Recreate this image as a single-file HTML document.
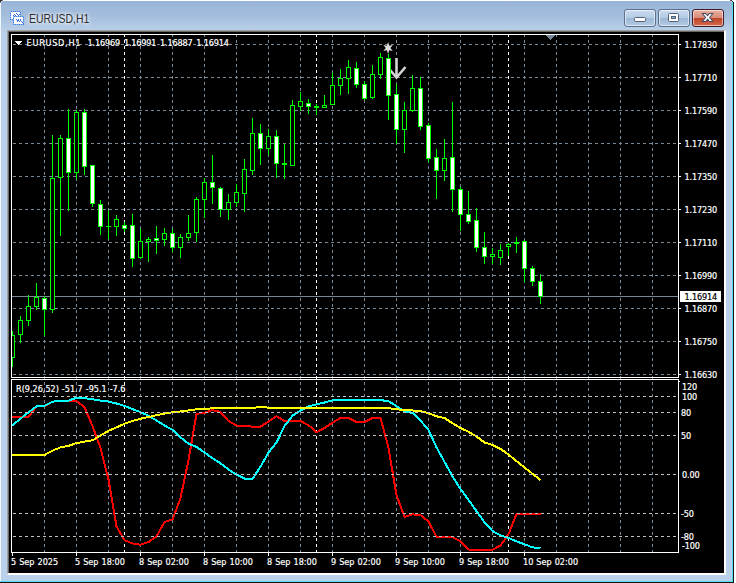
<!DOCTYPE html>
<html><head><meta charset="utf-8"><title>EURUSD,H1</title>
<style>
html,body{margin:0;padding:0;background:#fff;}
#w{position:relative;width:736px;height:583px;overflow:hidden;background:#fff;font-family:"Liberation Sans",sans-serif;}
#frame{position:absolute;left:0;top:0;width:734px;height:583px;background:#b9d1ea;}
#tb{position:absolute;left:0;top:0;width:733px;height:32px;background:linear-gradient(#fff 0,#fff 1px,#99b5d7 1px,#a3bddc 15px,#b9cfe8 30px);}
#le{position:absolute;left:0;top:0;width:1px;height:582px;background:#f0f6fc;}
#re1{position:absolute;left:732px;top:1px;width:1px;height:581px;background:#4fdcf6;}
#re2{position:absolute;left:733px;top:1px;width:1px;height:582px;background:#1c1214;}
#be1{position:absolute;left:0;top:581px;width:733px;height:1px;background:#4fdcf6;}
#be2{position:absolute;left:0;top:582px;width:734px;height:1px;background:#1c1214;}
#sunk{position:absolute;left:7px;top:30px;width:719px;height:545px;box-sizing:border-box;border-left:1px solid #a0a0a0;border-top:1px solid #a0a0a0;border-right:2px solid #fff;border-bottom:2px solid #fff;background:#696969;}
.t{position:absolute;font-family:"DejaVu Sans Condensed","DejaVu Sans","Liberation Sans",sans-serif;font-size:9px;line-height:11px;color:#fff;white-space:nowrap;-webkit-text-stroke:.2px;}
.p{letter-spacing:-.15px}
#title{position:absolute;left:29.4px;top:10px;font-size:12.5px;line-height:18px;color:#2e2e2e;transform-origin:0 0;transform:scaleX(0.835);text-shadow:0 0 4px #fff,0 0 6px #fff;}
.btn{position:absolute;top:9px;width:32px;height:18px;box-sizing:border-box;border:1px solid #5b6f8c;border-radius:3px;background:linear-gradient(#c9dbee 0,#b4cbe4 49%,#9bb6d6 50%,#b3cae4 100%);box-shadow:inset 0 0 0 1px rgba(255,255,255,.55);}
#bx{border-color:#431a2a;background:linear-gradient(#eab0a2 0,#d88a78 49%,#bf4326 50%,#d5694c 100%);}
</style></head><body><div id="w">
<div id="frame"></div><div id="tb"></div><div id="le"></div><div id="re1"></div><div id="re2"></div><div id="be1"></div><div id="be2"></div>
<div id="sunk"></div>
<svg width="16" height="16" viewBox="0 0 16 16" style="position:absolute;left:9px;top:10px" shape-rendering="crispEdges">
<rect x="1.5" y="1.5" width="10" height="8" fill="#fff" stroke="#8fb6f4"/>
<rect x="1.5" y="1.5" width="10" height="8" fill="none" stroke="#3a7bea" stroke-dasharray="1 1"/>
<path d="M3.5 5.5 h1 M4.5 4.5 h1 M5.5 5.5 h1 M6.5 3.5 h1 M7.5 4.5 h1 M8.5 5.5 h1 M9.5 4.5 h1" fill="none" stroke="#3a6fe0"/>
<rect x="4.5" y="6.5" width="10" height="8" fill="#fff" stroke="#8fb6f4"/>
<rect x="4.5" y="6.5" width="10" height="8" fill="none" stroke="#3a7bea" stroke-dasharray="1 1"/>
<path d="M6.5 9.5 h1 M7.5 10.5 h1 M7.5 11.5 h1 M8.5 9.5 h1 M8.5 10.5 h1 M9.5 11.5 h1 M10.5 10.5 h1 M10.5 9.5 h1 M11.5 11.5 h1 M12.5 12.5 h1" fill="none" stroke="#3a6fe0"/>
</svg>
<svg width="736" height="6" style="position:absolute;left:0;top:0" shape-rendering="crispEdges">
<rect x="0" y="0" width="2" height="1" fill="#2a2a2a"/><rect x="0" y="1" width="1" height="1" fill="#2a2a2a"/><rect x="2" y="0" width="1" height="1" fill="#8a8f96"/><rect x="0" y="2" width="1" height="1" fill="#8a8f96"/><rect x="1" y="1" width="1" height="1" fill="#dfe8f2"/>
<rect x="730" y="0" width="1" height="1" fill="#6b7785"/><rect x="731" y="0" width="1" height="1" fill="#222"/><rect x="732" y="0" width="2" height="1" fill="#fff"/><rect x="732" y="1" width="1" height="1" fill="#222"/><rect x="733" y="1" width="1" height="1" fill="#fff"/><rect x="731" y="1" width="1" height="1" fill="#cfeaf6"/>
</svg>
<div id="title">EURUSD,H1</div>
<div class="btn" style="left:624px"><svg width="30" height="16" style="position:absolute;left:0;top:0"><rect x="9.5" y="7.5" width="11" height="4" rx="1" fill="#fff" stroke="#53607a"/></svg></div>
<div class="btn" style="left:658px"><svg width="30" height="16" style="position:absolute;left:0;top:0"><rect x="9.5" y="3.5" width="10" height="8" rx="1" fill="#fff" stroke="#53607a"/><rect x="12.5" y="6.5" width="4" height="2" fill="#8fb0d6" stroke="#53607a"/></svg></div>
<div class="btn" id="bx" style="left:692px"><svg width="30" height="16" style="position:absolute;left:0;top:0"><path d="M9.3 3.5 L12.8 3.5 L14.6 5.7 L16.4 3.5 L19.9 3.5 L16.6 7.5 L19.9 11.5 L16.4 11.5 L14.6 9.3 L12.8 11.5 L9.3 11.5 L12.6 7.5 Z" fill="#fff" stroke="#434a66" stroke-width="1.1" stroke-linejoin="round"/></svg></div>
<svg width="736" height="583" viewBox="0 0 736 583" style="position:absolute;left:0;top:0" shape-rendering="crispEdges"><rect x="9" y="32" width="715" height="541" fill="#000"/><line x1="13" y1="44.5" x2="678" y2="44.5" stroke="#778899" stroke-dasharray="3 3"/><line x1="13" y1="77.5" x2="678" y2="77.5" stroke="#778899" stroke-dasharray="3 3"/><line x1="13" y1="110.5" x2="678" y2="110.5" stroke="#778899" stroke-dasharray="3 3"/><line x1="13" y1="143.5" x2="678" y2="143.5" stroke="#778899" stroke-dasharray="3 3"/><line x1="13" y1="176.5" x2="678" y2="176.5" stroke="#778899" stroke-dasharray="3 3"/><line x1="13" y1="209.5" x2="678" y2="209.5" stroke="#778899" stroke-dasharray="3 3"/><line x1="13" y1="242.5" x2="678" y2="242.5" stroke="#778899" stroke-dasharray="3 3"/><line x1="13" y1="275.5" x2="678" y2="275.5" stroke="#778899" stroke-dasharray="3 3"/><line x1="13" y1="308.5" x2="678" y2="308.5" stroke="#778899" stroke-dasharray="3 3"/><line x1="13" y1="341.5" x2="678" y2="341.5" stroke="#778899" stroke-dasharray="3 3"/><line x1="13" y1="374.5" x2="678" y2="374.5" stroke="#778899" stroke-dasharray="3 3"/><line x1="44.5" y1="34" x2="44.5" y2="552" stroke="#778899" stroke-dasharray="3 3"/><line x1="76.5" y1="34" x2="76.5" y2="552" stroke="#778899" stroke-dasharray="3 3"/><line x1="108.5" y1="34" x2="108.5" y2="552" stroke="#778899" stroke-dasharray="3 3"/><line x1="140.5" y1="34" x2="140.5" y2="552" stroke="#778899" stroke-dasharray="3 3"/><line x1="172.5" y1="34" x2="172.5" y2="552" stroke="#778899" stroke-dasharray="3 3"/><line x1="204.5" y1="34" x2="204.5" y2="552" stroke="#778899" stroke-dasharray="3 3"/><line x1="236.5" y1="34" x2="236.5" y2="552" stroke="#778899" stroke-dasharray="3 3"/><line x1="268.5" y1="34" x2="268.5" y2="552" stroke="#778899" stroke-dasharray="3 3"/><line x1="300.5" y1="34" x2="300.5" y2="552" stroke="#778899" stroke-dasharray="3 3"/><line x1="332.5" y1="34" x2="332.5" y2="552" stroke="#778899" stroke-dasharray="3 3"/><line x1="364.5" y1="34" x2="364.5" y2="552" stroke="#778899" stroke-dasharray="3 3"/><line x1="396.5" y1="34" x2="396.5" y2="552" stroke="#778899" stroke-dasharray="3 3"/><line x1="428.5" y1="34" x2="428.5" y2="552" stroke="#778899" stroke-dasharray="3 3"/><line x1="460.5" y1="34" x2="460.5" y2="552" stroke="#778899" stroke-dasharray="3 3"/><line x1="492.5" y1="34" x2="492.5" y2="552" stroke="#778899" stroke-dasharray="3 3"/><line x1="524.5" y1="34" x2="524.5" y2="552" stroke="#778899" stroke-dasharray="3 3"/><line x1="556.5" y1="34" x2="556.5" y2="552" stroke="#778899" stroke-dasharray="3 3"/><line x1="588.5" y1="34" x2="588.5" y2="552" stroke="#778899" stroke-dasharray="3 3"/><line x1="620.5" y1="34" x2="620.5" y2="552" stroke="#778899" stroke-dasharray="3 3"/><line x1="652.5" y1="34" x2="652.5" y2="552" stroke="#778899" stroke-dasharray="3 3"/><line x1="124.5" y1="34" x2="124.5" y2="552" stroke="#fff" stroke-dasharray="3 3"/><line x1="316.5" y1="34" x2="316.5" y2="552" stroke="#fff" stroke-dasharray="3 3"/><line x1="508.5" y1="34" x2="508.5" y2="552" stroke="#fff" stroke-dasharray="3 3"/><line x1="12" y1="296.5" x2="678" y2="296.5" stroke="#778899"/><g shape-rendering="auto" fill="none" stroke="#d4d4d4" stroke-width="2.6" stroke-linecap="butt" stroke-linejoin="miter"><path d="M396.5 58 V77"/><path d="M387.5 67 L396.5 77.5 L405.5 67"/></g><clipPath id="cc"><rect x="12" y="35" width="666" height="342"/></clipPath><g clip-path="url(#cc)"><rect x="12" y="331" width="1" height="36" fill="#00ff00"/><rect x="10" y="335" width="5" height="23" fill="#00ff00"/><rect x="11" y="336" width="3" height="21" fill="#000"/><rect x="20" y="316" width="1" height="27" fill="#00ff00"/><rect x="18" y="320" width="5" height="15" fill="#00ff00"/><rect x="19" y="321" width="3" height="13" fill="#000"/><rect x="28" y="295" width="1" height="31" fill="#00ff00"/><rect x="26" y="306" width="5" height="15" fill="#00ff00"/><rect x="27" y="307" width="3" height="13" fill="#000"/><rect x="36" y="283" width="1" height="27" fill="#00ff00"/><rect x="34" y="297" width="5" height="10" fill="#00ff00"/><rect x="35" y="298" width="3" height="8" fill="#000"/><rect x="44" y="296" width="1" height="40" fill="#00ff00"/><rect x="42" y="298" width="5" height="12" fill="#00ff00"/><rect x="43" y="299" width="3" height="10" fill="#fff"/><rect x="52" y="135" width="1" height="178" fill="#00ff00"/><rect x="50" y="178" width="5" height="132" fill="#00ff00"/><rect x="51" y="179" width="3" height="130" fill="#000"/><rect x="60" y="135" width="1" height="101" fill="#00ff00"/><rect x="58" y="138" width="5" height="40" fill="#00ff00"/><rect x="59" y="139" width="3" height="38" fill="#000"/><rect x="68" y="109" width="1" height="102" fill="#00ff00"/><rect x="66" y="138" width="5" height="35" fill="#00ff00"/><rect x="67" y="139" width="3" height="33" fill="#fff"/><rect x="76" y="110" width="1" height="69" fill="#00ff00"/><rect x="74" y="112" width="5" height="61" fill="#00ff00"/><rect x="75" y="113" width="3" height="59" fill="#000"/><rect x="84" y="109" width="1" height="66" fill="#00ff00"/><rect x="82" y="112" width="5" height="55" fill="#00ff00"/><rect x="83" y="113" width="3" height="53" fill="#fff"/><rect x="92" y="165" width="1" height="42" fill="#00ff00"/><rect x="90" y="165" width="5" height="39" fill="#00ff00"/><rect x="91" y="166" width="3" height="37" fill="#fff"/><rect x="100" y="200" width="1" height="35" fill="#00ff00"/><rect x="98" y="204" width="5" height="23" fill="#00ff00"/><rect x="99" y="205" width="3" height="21" fill="#fff"/><rect x="108" y="210" width="1" height="29" fill="#00ff00"/><rect x="106" y="226" width="5" height="1" fill="#00ff00"/><rect x="116" y="215" width="1" height="21" fill="#00ff00"/><rect x="114" y="219" width="5" height="8" fill="#00ff00"/><rect x="115" y="220" width="3" height="6" fill="#000"/><rect x="124" y="222" width="1" height="10" fill="#00ff00"/><rect x="122" y="225" width="5" height="4" fill="#00ff00"/><rect x="123" y="226" width="3" height="2" fill="#fff"/><rect x="132" y="214" width="1" height="53" fill="#00ff00"/><rect x="130" y="225" width="5" height="34" fill="#00ff00"/><rect x="131" y="226" width="3" height="32" fill="#fff"/><rect x="140" y="229" width="1" height="30" fill="#00ff00"/><rect x="138" y="241" width="5" height="17" fill="#00ff00"/><rect x="139" y="242" width="3" height="15" fill="#000"/><rect x="148" y="237" width="1" height="25" fill="#00ff00"/><rect x="146" y="239" width="5" height="3" fill="#00ff00"/><rect x="147" y="240" width="3" height="1" fill="#000"/><rect x="156" y="226" width="1" height="28" fill="#00ff00"/><rect x="154" y="238" width="5" height="3" fill="#00ff00"/><rect x="155" y="239" width="3" height="1" fill="#fff"/><rect x="164" y="228" width="1" height="18" fill="#00ff00"/><rect x="162" y="233" width="5" height="7" fill="#00ff00"/><rect x="163" y="234" width="3" height="5" fill="#000"/><rect x="172" y="229" width="1" height="23" fill="#00ff00"/><rect x="170" y="233" width="5" height="15" fill="#00ff00"/><rect x="171" y="234" width="3" height="13" fill="#fff"/><rect x="180" y="234" width="1" height="24" fill="#00ff00"/><rect x="178" y="237" width="5" height="11" fill="#00ff00"/><rect x="179" y="238" width="3" height="9" fill="#000"/><rect x="188" y="215" width="1" height="26" fill="#00ff00"/><rect x="186" y="233" width="5" height="5" fill="#00ff00"/><rect x="187" y="234" width="3" height="3" fill="#000"/><rect x="196" y="197" width="1" height="45" fill="#00ff00"/><rect x="194" y="199" width="5" height="34" fill="#00ff00"/><rect x="195" y="200" width="3" height="32" fill="#000"/><rect x="204" y="178" width="1" height="40" fill="#00ff00"/><rect x="202" y="182" width="5" height="18" fill="#00ff00"/><rect x="203" y="183" width="3" height="16" fill="#000"/><rect x="212" y="155" width="1" height="49" fill="#00ff00"/><rect x="210" y="182" width="5" height="6" fill="#00ff00"/><rect x="211" y="183" width="3" height="4" fill="#fff"/><rect x="220" y="187" width="1" height="30" fill="#00ff00"/><rect x="218" y="188" width="5" height="22" fill="#00ff00"/><rect x="219" y="189" width="3" height="20" fill="#fff"/><rect x="228" y="194" width="1" height="26" fill="#00ff00"/><rect x="226" y="202" width="5" height="8" fill="#00ff00"/><rect x="227" y="203" width="3" height="6" fill="#000"/><rect x="236" y="184" width="1" height="23" fill="#00ff00"/><rect x="234" y="192" width="5" height="11" fill="#00ff00"/><rect x="235" y="193" width="3" height="9" fill="#000"/><rect x="244" y="159" width="1" height="53" fill="#00ff00"/><rect x="242" y="169" width="5" height="25" fill="#00ff00"/><rect x="243" y="170" width="3" height="23" fill="#000"/><rect x="252" y="118" width="1" height="57" fill="#00ff00"/><rect x="250" y="133" width="5" height="38" fill="#00ff00"/><rect x="251" y="134" width="3" height="36" fill="#000"/><rect x="260" y="124" width="1" height="41" fill="#00ff00"/><rect x="258" y="133" width="5" height="16" fill="#00ff00"/><rect x="259" y="134" width="3" height="14" fill="#fff"/><rect x="268" y="129" width="1" height="26" fill="#00ff00"/><rect x="266" y="136" width="5" height="13" fill="#00ff00"/><rect x="267" y="137" width="3" height="11" fill="#000"/><rect x="276" y="130" width="1" height="48" fill="#00ff00"/><rect x="274" y="136" width="5" height="28" fill="#00ff00"/><rect x="275" y="137" width="3" height="26" fill="#fff"/><rect x="284" y="144" width="1" height="35" fill="#00ff00"/><rect x="282" y="163" width="5" height="2" fill="#00ff00"/><rect x="292" y="100" width="1" height="66" fill="#00ff00"/><rect x="290" y="105" width="5" height="61" fill="#00ff00"/><rect x="291" y="106" width="3" height="59" fill="#000"/><rect x="300" y="92" width="1" height="19" fill="#00ff00"/><rect x="298" y="101" width="5" height="6" fill="#00ff00"/><rect x="299" y="102" width="3" height="4" fill="#000"/><rect x="308" y="99" width="1" height="15" fill="#00ff00"/><rect x="306" y="103" width="5" height="4" fill="#00ff00"/><rect x="307" y="104" width="3" height="2" fill="#fff"/><rect x="316" y="104" width="1" height="11" fill="#00ff00"/><rect x="314" y="106" width="5" height="2" fill="#00ff00"/><rect x="324" y="95" width="1" height="13" fill="#00ff00"/><rect x="322" y="105" width="5" height="3" fill="#00ff00"/><rect x="323" y="106" width="3" height="1" fill="#000"/><rect x="332" y="73" width="1" height="32" fill="#00ff00"/><rect x="330" y="85" width="5" height="20" fill="#00ff00"/><rect x="331" y="86" width="3" height="18" fill="#000"/><rect x="340" y="69" width="1" height="26" fill="#00ff00"/><rect x="338" y="78" width="5" height="8" fill="#00ff00"/><rect x="339" y="79" width="3" height="6" fill="#000"/><rect x="348" y="60" width="1" height="34" fill="#00ff00"/><rect x="346" y="67" width="5" height="12" fill="#00ff00"/><rect x="347" y="68" width="3" height="10" fill="#000"/><rect x="356" y="62" width="1" height="26" fill="#00ff00"/><rect x="354" y="68" width="5" height="17" fill="#00ff00"/><rect x="355" y="69" width="3" height="15" fill="#fff"/><rect x="364" y="81" width="1" height="19" fill="#00ff00"/><rect x="362" y="84" width="5" height="15" fill="#00ff00"/><rect x="363" y="85" width="3" height="13" fill="#fff"/><rect x="372" y="65" width="1" height="34" fill="#00ff00"/><rect x="370" y="74" width="5" height="24" fill="#00ff00"/><rect x="371" y="75" width="3" height="22" fill="#000"/><rect x="380" y="53" width="1" height="26" fill="#00ff00"/><rect x="378" y="57" width="5" height="18" fill="#00ff00"/><rect x="379" y="58" width="3" height="16" fill="#000"/><rect x="388" y="54" width="1" height="66" fill="#00ff00"/><rect x="386" y="58" width="5" height="38" fill="#00ff00"/><rect x="387" y="59" width="3" height="36" fill="#fff"/><rect x="396" y="84" width="1" height="60" fill="#00ff00"/><rect x="394" y="94" width="5" height="36" fill="#00ff00"/><rect x="395" y="95" width="3" height="34" fill="#fff"/><rect x="404" y="102" width="1" height="51" fill="#00ff00"/><rect x="402" y="110" width="5" height="20" fill="#00ff00"/><rect x="403" y="111" width="3" height="18" fill="#000"/><rect x="412" y="75" width="1" height="37" fill="#00ff00"/><rect x="410" y="88" width="5" height="23" fill="#00ff00"/><rect x="411" y="89" width="3" height="21" fill="#000"/><rect x="420" y="77" width="1" height="53" fill="#00ff00"/><rect x="418" y="88" width="5" height="39" fill="#00ff00"/><rect x="419" y="89" width="3" height="37" fill="#fff"/><rect x="428" y="123" width="1" height="39" fill="#00ff00"/><rect x="426" y="125" width="5" height="34" fill="#00ff00"/><rect x="427" y="126" width="3" height="32" fill="#fff"/><rect x="436" y="149" width="1" height="50" fill="#00ff00"/><rect x="434" y="157" width="5" height="14" fill="#00ff00"/><rect x="435" y="158" width="3" height="12" fill="#fff"/><rect x="444" y="139" width="1" height="42" fill="#00ff00"/><rect x="442" y="158" width="5" height="13" fill="#00ff00"/><rect x="443" y="159" width="3" height="11" fill="#000"/><rect x="452" y="102" width="1" height="110" fill="#00ff00"/><rect x="450" y="157" width="5" height="33" fill="#00ff00"/><rect x="451" y="158" width="3" height="31" fill="#fff"/><rect x="460" y="187" width="1" height="44" fill="#00ff00"/><rect x="458" y="189" width="5" height="26" fill="#00ff00"/><rect x="459" y="190" width="3" height="24" fill="#fff"/><rect x="468" y="191" width="1" height="33" fill="#00ff00"/><rect x="466" y="214" width="5" height="8" fill="#00ff00"/><rect x="467" y="215" width="3" height="6" fill="#fff"/><rect x="476" y="208" width="1" height="44" fill="#00ff00"/><rect x="474" y="220" width="5" height="28" fill="#00ff00"/><rect x="475" y="221" width="3" height="26" fill="#fff"/><rect x="484" y="232" width="1" height="32" fill="#00ff00"/><rect x="482" y="247" width="5" height="10" fill="#00ff00"/><rect x="483" y="248" width="3" height="8" fill="#fff"/><rect x="492" y="248" width="1" height="16" fill="#00ff00"/><rect x="490" y="254" width="5" height="3" fill="#00ff00"/><rect x="491" y="255" width="3" height="1" fill="#000"/><rect x="500" y="244" width="1" height="21" fill="#00ff00"/><rect x="498" y="250" width="5" height="8" fill="#00ff00"/><rect x="499" y="251" width="3" height="6" fill="#000"/><rect x="508" y="243" width="1" height="13" fill="#00ff00"/><rect x="506" y="244" width="5" height="3" fill="#00ff00"/><rect x="507" y="245" width="3" height="1" fill="#000"/><rect x="516" y="237" width="1" height="16" fill="#00ff00"/><rect x="514" y="242" width="5" height="2" fill="#00ff00"/><rect x="524" y="240" width="1" height="42" fill="#00ff00"/><rect x="522" y="241" width="5" height="28" fill="#00ff00"/><rect x="523" y="242" width="3" height="26" fill="#fff"/><rect x="532" y="266" width="1" height="20" fill="#00ff00"/><rect x="530" y="268" width="5" height="14" fill="#00ff00"/><rect x="531" y="269" width="3" height="12" fill="#fff"/><rect x="540" y="274" width="1" height="30" fill="#00ff00"/><rect x="538" y="281" width="5" height="16" fill="#00ff00"/><rect x="539" y="282" width="3" height="14" fill="#fff"/></g><polygon shape-rendering="auto" points="388.10,41.90 389.27,45.65 392.78,44.90 390.44,47.90 392.78,50.90 389.27,50.15 388.10,53.90 386.93,50.15 383.42,50.90 385.76,47.90 383.42,44.90 386.93,45.65" fill="#dcdcdc"/><polygon points="546,35 555,35 550.5,40" fill="#778899"/><clipPath id="ci"><rect x="12" y="380" width="666" height="172"/></clipPath><g clip-path="url(#ci)"><polyline shape-rendering="crispEdges" points="4.5,417.0 12.5,417.0 20.5,417.0 28.5,417.0 36.5,406.3 44.5,406.3 52.5,401.6 60.5,401.0 68.5,401.0 76.5,401.2 84.5,407.2 92.5,426.1 100.5,448.0 108.5,479.5 116.5,526.4 124.5,540.2 132.5,543.4 140.5,544.7 148.5,542.1 156.5,536.4 164.5,522.1 172.5,519.4 180.5,498.1 188.5,460.0 196.5,413.8 204.5,412.9 212.5,410.1 220.5,412.0 228.5,421.0 236.5,425.5 244.5,425.7 252.5,426.7 260.5,426.7 268.5,421.4 276.5,416.3 284.5,421.0 292.5,421.0 300.5,421.0 308.5,425.2 316.5,432.2 324.5,428.0 332.5,422.7 340.5,418.0 348.5,418.0 356.5,422.0 364.5,422.0 372.5,418.0 380.5,418.0 388.5,447.8 396.5,495.2 404.5,516.9 412.5,514.4 420.5,515.0 428.5,521.6 436.5,536.7 444.5,536.7 452.5,537.0 460.5,541.4 468.5,549.5 476.5,549.9 484.5,549.9 492.5,549.7 500.5,545.5 508.5,534.3 516.5,514.0 524.5,514.0 532.5,514.0 540.5,514.0" fill="none" stroke="#ff0000" stroke-width="2" stroke-linejoin="round"/><polyline shape-rendering="crispEdges" points="4.5,431.8 12.5,425.2 20.5,418.6 28.5,412.3 36.5,406.3 44.5,405.9 52.5,401.6 60.5,401.0 68.5,400.6 76.5,397.8 84.5,398.2 92.5,399.3 100.5,400.6 108.5,401.6 116.5,403.5 124.5,405.9 132.5,409.1 140.5,412.2 148.5,415.7 156.5,420.5 164.5,425.5 172.5,429.9 180.5,437.4 188.5,443.7 196.5,446.9 204.5,452.5 212.5,458.2 220.5,463.3 228.5,469.5 236.5,474.6 244.5,478.6 252.5,478.9 260.5,466.7 268.5,452.5 276.5,442.5 284.5,426.1 292.5,415.7 300.5,410.5 308.5,406.3 316.5,404.4 324.5,402.5 332.5,400.3 340.5,400.1 348.5,400.1 356.5,400.1 364.5,400.1 372.5,400.1 380.5,400.1 388.5,401.2 396.5,406.1 404.5,411.3 412.5,412.9 420.5,420.5 428.5,429.9 436.5,447.4 444.5,461.8 452.5,476.3 460.5,489.0 468.5,499.9 476.5,511.2 484.5,522.2 492.5,531.0 500.5,535.4 508.5,537.9 516.5,541.4 524.5,544.2 532.5,547.4 540.5,548.0" fill="none" stroke="#00ffff" stroke-width="2" stroke-linejoin="round"/><polyline shape-rendering="crispEdges" points="4.5,455.0 12.5,455.0 20.5,455.0 28.5,455.0 36.5,455.0 44.5,455.0 52.5,450.6 60.5,447.4 68.5,445.9 76.5,443.1 84.5,441.6 92.5,440.3 100.5,435.5 108.5,430.8 116.5,427.4 124.5,423.8 132.5,421.0 140.5,418.7 148.5,417.0 156.5,415.2 164.5,413.5 172.5,412.3 180.5,411.4 188.5,410.5 196.5,409.3 204.5,408.9 212.5,408.3 220.5,407.8 228.5,407.8 236.5,407.8 244.5,407.8 252.5,407.8 260.5,407.2 268.5,407.6 276.5,407.8 284.5,407.8 292.5,407.8 300.5,407.8 308.5,407.8 316.5,407.8 324.5,407.8 332.5,407.8 340.5,407.8 348.5,407.8 356.5,407.8 364.5,407.8 372.5,407.8 380.5,407.8 388.5,408.2 396.5,409.3 404.5,410.1 412.5,410.5 420.5,411.0 428.5,413.3 436.5,416.3 444.5,418.0 452.5,423.3 460.5,428.0 468.5,431.8 476.5,436.5 484.5,442.5 492.5,445.0 500.5,448.9 508.5,454.5 516.5,461.1 524.5,467.5 532.5,473.8 540.5,480.1" fill="none" stroke="#ffff00" stroke-width="2" stroke-linejoin="round"/></g><line x1="13" y1="396.5" x2="678" y2="396.5" stroke="#c0c0c0" stroke-dasharray="3 3"/><line x1="13" y1="412.5" x2="678" y2="412.5" stroke="#c0c0c0" stroke-dasharray="3 3"/><line x1="13" y1="435.5" x2="678" y2="435.5" stroke="#c0c0c0" stroke-dasharray="3 3"/><line x1="13" y1="474.5" x2="678" y2="474.5" stroke="#c0c0c0" stroke-dasharray="3 3"/><line x1="13" y1="513.5" x2="678" y2="513.5" stroke="#c0c0c0" stroke-dasharray="3 3"/><line x1="13" y1="536.5" x2="678" y2="536.5" stroke="#c0c0c0" stroke-dasharray="3 3"/><rect x="11.5" y="34.5" width="667" height="343" fill="none" stroke="#fff"/><rect x="11.5" y="379.5" width="667" height="173" fill="none" stroke="#fff"/><rect x="679" y="44" width="2" height="1" fill="#fff"/><rect x="679" y="77" width="2" height="1" fill="#fff"/><rect x="679" y="110" width="2" height="1" fill="#fff"/><rect x="679" y="143" width="2" height="1" fill="#fff"/><rect x="679" y="176" width="2" height="1" fill="#fff"/><rect x="679" y="209" width="2" height="1" fill="#fff"/><rect x="679" y="242" width="2" height="1" fill="#fff"/><rect x="679" y="275" width="2" height="1" fill="#fff"/><rect x="679" y="308" width="2" height="1" fill="#fff"/><rect x="679" y="341" width="2" height="1" fill="#fff"/><rect x="679" y="374" width="2" height="1" fill="#fff"/><rect x="679" y="381" width="1" height="1" fill="#fff"/><rect x="12" y="553" width="1" height="3" fill="#fff"/><rect x="76" y="553" width="1" height="3" fill="#fff"/><rect x="140" y="553" width="1" height="3" fill="#fff"/><rect x="204" y="553" width="1" height="3" fill="#fff"/><rect x="268" y="553" width="1" height="3" fill="#fff"/><rect x="332" y="553" width="1" height="3" fill="#fff"/><rect x="396" y="553" width="1" height="3" fill="#fff"/><rect x="460" y="553" width="1" height="3" fill="#fff"/><rect x="524" y="553" width="1" height="3" fill="#fff"/><polygon points="15,41 22,41 18.5,45" fill="#fff"/><rect x="680" y="291" width="41" height="11" fill="#fff"/></svg>
<span class="t p" style="left:684.5px;top:40px">1.17830</span><span class="t p" style="left:684.5px;top:73px">1.17710</span><span class="t p" style="left:684.5px;top:106px">1.17590</span><span class="t p" style="left:684.5px;top:139px">1.17470</span><span class="t p" style="left:684.5px;top:172px">1.17350</span><span class="t p" style="left:684.5px;top:205px">1.17230</span><span class="t p" style="left:684.5px;top:238px">1.17110</span><span class="t p" style="left:684.5px;top:271px">1.16990</span><span class="t p" style="left:684.5px;top:304px">1.16870</span><span class="t p" style="left:684.5px;top:337px">1.16750</span><span class="t p" style="left:684.5px;top:370px">1.16630</span><span class="t p" style="left:684.5px;top:292px;color:#000">1.16914</span><span class="t p" style="left:682px;top:382px">120</span><span class="t p" style="left:682px;top:392px">100</span><span class="t p" style="left:681px;top:408px">80</span><span class="t p" style="left:681px;top:431px">50</span><span class="t p" style="left:682px;top:470px">0.00</span><span class="t p" style="left:681px;top:509px">-50</span><span class="t p" style="left:681px;top:532px">-80</span><span class="t p" style="left:682px;top:541px">-100</span><span class="t" style="left:11px;top:557px;word-spacing:.5px">5 Sep 2025</span><span class="t" style="left:75px;top:557px;word-spacing:.5px">5 Sep 18:00</span><span class="t" style="left:139px;top:557px;word-spacing:.5px">8 Sep 02:00</span><span class="t" style="left:203px;top:557px;word-spacing:.5px">8 Sep 10:00</span><span class="t" style="left:267px;top:557px;word-spacing:.5px">8 Sep 18:00</span><span class="t" style="left:331px;top:557px;word-spacing:.5px">9 Sep 02:00</span><span class="t" style="left:395px;top:557px;word-spacing:.5px">9 Sep 10:00</span><span class="t" style="left:459px;top:557px;word-spacing:.5px">9 Sep 18:00</span><span class="t" style="left:523px;top:557px;word-spacing:.5px">10 Sep 02:00</span><span class="t" style="left:26.6px;top:38px;letter-spacing:.75px">EURUSD,H1</span><span class="t p" style="left:87.6px;top:38px">1.16969</span><span class="t p" style="left:123.9px;top:38px">1.16991</span><span class="t p" style="left:160.1px;top:38px">1.16887</span><span class="t p" style="left:196.3px;top:38px">1.16914</span><span class="t" style="left:16px;top:384px;white-space:pre;word-spacing:.4px">R(9,26,52) -51.7 -95.1 -7.6</span>
</div></body></html>
